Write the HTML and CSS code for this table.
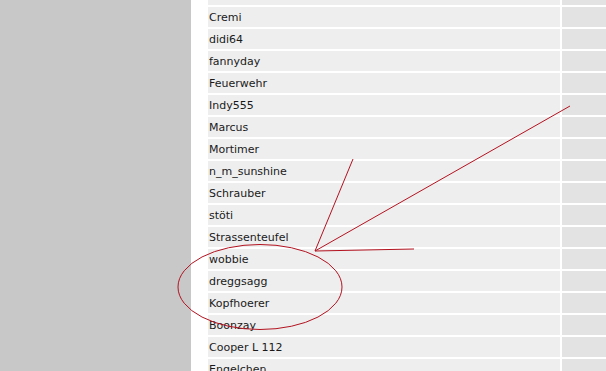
FILE: index.html
```html
<!DOCTYPE html>
<html>
    <head>
        <meta name="viewport" content="width=device-width, initial-scale=1">
        <link rel="stylesheet" href="styles.css">
    </head>
    <body>
        <div id="page">
            <div class="side"></div>
            <div class="content">
                <div class="list">
                    <div class="name"></div><div class="extra"></div>
                    <div class="name">Cremi</div><div class="extra"></div>
                    <div class="name">didi64</div><div class="extra"></div>
                    <div class="name">fannyday</div><div class="extra"></div>
                    <div class="name">Feuerwehr</div><div class="extra"></div>
                    <div class="name">Indy555</div><div class="extra"></div>
                    <div class="name">Marcus</div><div class="extra"></div>
                    <div class="name">Mortimer</div><div class="extra"></div>
                    <div class="name">n_m_sunshine</div><div class="extra"></div>
                    <div class="name">Schrauber</div><div class="extra"></div>
                    <div class="name">stöti</div><div class="extra"></div>
                    <div class="name">Strassenteufel</div><div class="extra"></div>
                    <div class="name">wobbie</div><div class="extra"></div>
                    <div class="name">dreggsagg</div><div class="extra"></div>
                    <div class="name">Kopfhoerer</div><div class="extra"></div>
                    <div class="name">Boonzay</div><div class="extra"></div>
                    <div class="name">Cooper L 112</div><div class="extra"></div>
                    <div class="name">Engelchen</div><div class="extra"></div>
                </div>
            </div>
        </div>

        <!-- hand drawn marks on top -->
        <svg class="marks" width="606" height="371" viewBox="0 0 606 371">
            <g fill="none" stroke="#b3121f" stroke-width="1">
                <ellipse cx="260" cy="287" rx="82" ry="42.5"/>
                <path d="M353 159 L315 251 L570 106"/>
                <path d="M315 251 L414 249"/>
            </g>
        </svg>
    </body>
</html>
```

FILE: styles.css
```css
html, body { margin: 0; padding: 0; background: #fff; overflow: hidden; }
body { font-family: "DejaVu Sans", Verdana, sans-serif; font-size: 11px; color: #1a1a1a; }

#page {
    display: flex;
    height: 371px;
}
.side {
    width: 191px;
    background: #c8c8c8;
    flex: none;
}
.content {
    flex: 1;
    padding-left: 17px;
    overflow: hidden;
}
.list {
    display: grid;
    grid-template-columns: 352px 60px;
    grid-auto-rows: 20px;
    gap: 2px;
    margin-top: -15px;
}
.name {
    background: #eeeeee;
    line-height: 21px;
    padding-left: 1px;
    white-space: nowrap;
}
.extra { background: #e3e3e3; }

.marks {
    position: absolute;
    left: 0;
    top: 0;
}
```
